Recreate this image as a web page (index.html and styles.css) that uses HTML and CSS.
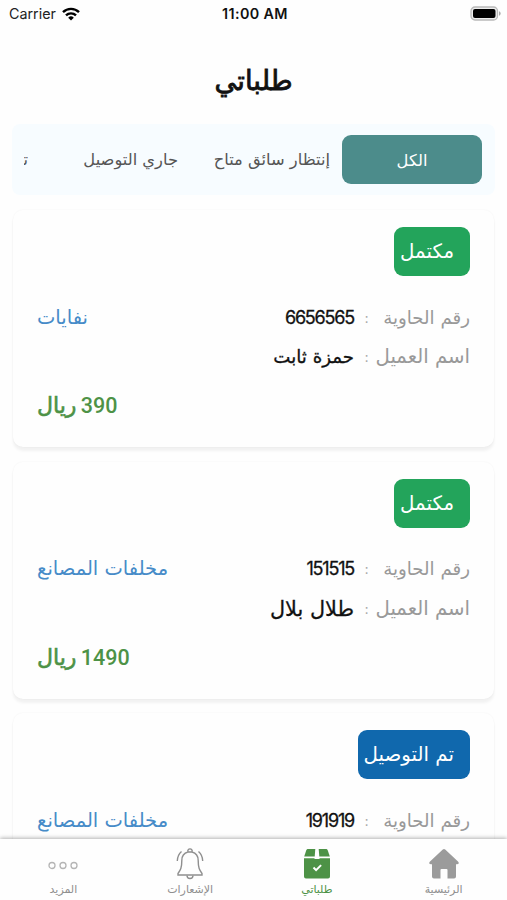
FILE: index.html
```html
<!DOCTYPE html>
<html lang="ar" dir="rtl">
  <head>
    <meta charset="UTF-8" />
    <meta name="viewport" content="width=device-width, initial-scale=1.0" />
    <title>طلباتي</title>
    <link rel="stylesheet" href="styles.css">
  </head>
  <body>
    <div class="statusBar" dir="ltr">
      <div class="carrier">
        Carrier
        <svg width="18" height="14" viewBox="0 0 18 14">
          <g fill="none" stroke="#000" stroke-width="2.4">
            <path d="M1 5.2a11.4 11.4 0 0 1 16 0" />
            <path d="M4 8.4a7.1 7.1 0 0 1 10 0" />
          </g>
          <path d="M9 13.6L6.2 10.7a4 4 0 0 1 5.6 0z" />
        </svg>
      </div>
      <div class="time">11:00 AM</div>
      <div class="battery">
        <svg width="31" height="15" viewBox="0 0 31 15">
          <rect x="1" y="1" width="26.5" height="13" rx="4" fill="#eee" stroke="#b9b9b9" stroke-width="1.3" />
          <rect x="3" y="3" width="22.5" height="9" rx="2" />
          <path d="M29 5.3a2.3 2.3 0 0 1 0 4.4z" fill="#aaa" />
        </svg>
      </div>
    </div>

    <h1 class="title">طلباتي</h1>

    <div class="tabs">
      <div class="tab active">الكل</div>
      <div class="tab waiting">إنتظار سائق متاح</div>
      <div class="tab delivering">جاري التوصيل</div>
      <div class="tab delivered">تم التوصيل</div>
    </div>

    <div class="orders">
      <div class="card">
        <div class="badge done">مكتمل</div>
        <div class="row">
          <span class="label">رقم الحاوية</span><span class="colon">:</span>
          <span class="value number">6656565</span>
          <span class="type">نفايات</span>
        </div>
        <div class="row">
          <span class="label client">اسم العميل</span><span class="colon">:</span>
          <span class="value">حمزة ثابت</span>
        </div>
        <div class="price">390 <span>ريال</span></div>
      </div>

      <div class="card">
        <div class="badge done">مكتمل</div>
        <div class="row">
          <span class="label">رقم الحاوية</span><span class="colon">:</span>
          <span class="value number">151515</span>
          <span class="type">مخلفات المصانع</span>
        </div>
        <div class="row">
          <span class="label client">اسم العميل</span><span class="colon">:</span>
          <span class="value large">طلال بلال</span>
        </div>
        <div class="price">1490 <span>ريال</span></div>
      </div>

      <div class="card">
        <div class="badge sent">تم التوصيل</div>
        <div class="row">
          <span class="label">رقم الحاوية</span><span class="colon">:</span>
          <span class="value number">191919</span>
          <span class="type">مخلفات المصانع</span>
        </div>
      </div>
    </div>

    <div class="navBar">
      <div class="navItem">
        <svg width="32" height="32" viewBox="0 0 32 32" fill="#9b9b9b">
          <path d="M14.8 1.6a1.8 1.8 0 0 1 2.4 0L30 13.4c1.4 1.3.8 2.8-1 2.8h-1V28.5a2 2 0 0 1-2 2h-6.5V22a1 1 0 0 0-1-1h-5a1 1 0 0 0-1 1v8.5H6a2 2 0 0 1-2-2V16.2H3c-1.8 0-2.4-1.5-1-2.8z" />
        </svg>
        الرئيسية
      </div>
      <div class="navItem current">
        <svg width="28" height="32" viewBox="0 0 28 32" fill="#4d9246">
          <path d="M5 1h7.3l-.6 7.5H1.2L3.2 2.5C3.6 1.5 4 1 5 1z" />
          <path d="M15.7 1H23c1 0 1.4.5 1.8 1.5l2 6H16.3z" />
          <path d="M1 10.3h10.5v.7h5v-.7H27V28.5a2 2 0 0 1-2 2H3a2 2 0 0 1-2-2z" />
          <path d="M10.5 19.5l2.6 2.6 5-5" fill="none" stroke="#fff" stroke-width="2" />
        </svg>
        طلباتي
      </div>
      <div class="navItem">
        <svg width="30" height="32" viewBox="0 0 30 32" fill="none" stroke="#8f8f8f" stroke-width="1.4">
          <path d="M13 4a2.2 2.2 0 1 1 4 0M13 4c-4 1-6.2 4-6.2 8.5C6.8 20 5.5 22 3 25.5V27h24v-1.5c-2.5-3.5-3.8-5.5-3.8-13C23.2 8 21 5 17 4" />
          <path d="M12 27.5a3 3 0 0 0 6 0M13 4h4" />
          <path d="M6.5 3.5C4 5.7 2.4 8.8 2.3 13M23.5 3.5c2.5 2.2 4.1 5.3 4.2 9.5" />
        </svg>
        الإشعارات
      </div>
      <div class="navItem">
        <svg width="32" height="32" viewBox="0 0 32 32" fill="none" stroke="#b5b5b5" stroke-width="1.3">
          <circle cx="5" cy="17.5" r="3" />
          <circle cx="16" cy="17.5" r="3" />
          <circle cx="27" cy="17.5" r="3" />
        </svg>
        المزيد
      </div>
    </div>
  </body>
</html>
```

FILE: styles.css
```css
* {
  box-sizing: border-box;
}
body {
  margin: 0;
  height: 900px;
  display: flex;
  flex-direction: column;
  overflow: hidden;
  background-color: #fefefe;
  font-family: "DejaVu Sans", sans-serif;
  white-space: nowrap;
}
.statusBar {
  height: 27px;
  flex: none;
  display: grid;
  grid-template-columns: 1fr auto 1fr;
  align-items: center;
  padding: 0 6px 0 9px;
  font-family: Inter, sans-serif;
  font-size: 14.3px;
  color: #222;
}
.carrier {
  display: flex;
  align-items: center;
  gap: 6px;
}
.time {
  font-weight: 600;
  letter-spacing: 0.4px;
  color: #111;
}
.battery {
  display: flex;
  justify-content: flex-end;
}
.title {
  flex: none;
  height: 97px;
  margin: 0;
  line-height: 107px;
  text-align: center;
  font-size: 27.5px;
  font-weight: normal;
  -webkit-text-stroke: 0.8px #111;
  color: #111;
}
.tabs {
  flex: none;
  display: flex;
  align-items: center;
  height: 71px;
  margin: 0 12px;
  padding: 0 13px;
  background-color: #f7fcff;
  border-radius: 8px;
  overflow: hidden;
}
.tab {
  flex: none;
  font-size: 16.3px;
  line-height: 51px;
  color: #555;
}
.tab.active {
  width: 140px;
  height: 49px;
  margin-left: 12px;
  border-radius: 9px;
  text-align: center;
  background-color: #4c8c8b;
  color: white;
}
.tab.waiting {
  width: 117px;
}
.tab.delivering {
  width: 94px;
  margin-right: 35px;
}
.tab.delivered {
  width: 4px;
  margin-right: 56px;
  overflow: hidden;
}
.orders {
  flex: 1;
  min-height: 0;
  overflow: hidden;
  padding: 15px 13px 0;
}
.card {
  height: 237px;
  margin-bottom: 14.5px;
  padding: 17px 24px 0;
  background-color: #fefefe;
  border-radius: 10px;
  box-shadow: 0 4px 3px rgba(0, 0, 0, 0.05), 0 0 2px rgba(0, 0, 0, 0.05);
}
.badge {
  width: 76px;
  height: 49px;
  margin-bottom: 21px;
  padding-right: 16px;
  border-radius: 9px;
  line-height: 50px;
  font-size: 19.8px;
  color: white;
}
.done {
  background-color: #23a45b;
}
.sent {
  width: 112px;
  background-color: #1068ad;
}
.row {
  display: flex;
  align-items: center;
  height: 39.5px;
  padding-top: 2px;
  font-size: 18.2px;
  line-height: 32px;
}
.label {
  width: 95px;
  color: #999;
}
.client {
  font-size: 19.7px;
}
.colon {
  width: 21px;
  padding-right: 6px;
  color: #aaa;
  font-size: 14px;
}
.value {
  color: #111;
  -webkit-text-stroke: 0.3px #111;
}
.large {
  font-size: 20.8px;
}
.number {
  font-family: Inter, sans-serif;
  font-size: 18px;
  line-height: 30px;
  letter-spacing: -1.2px;
}
.type {
  margin-right: auto;
  font-size: 19.5px;
  color: #468bc8;
}
.price {
  height: 56px;
  line-height: 60px;
  text-align: left;
  font-family: Roboto, sans-serif;
  font-size: 21.5px;
  font-weight: 500;
  letter-spacing: -1.4px;
  word-spacing: -1px;
  color: #4d9246;
}
.price span {
  font-family: "DejaVu Sans", sans-serif;
  font-size: 22px;
  font-weight: normal;
  letter-spacing: 0;
  -webkit-text-stroke: 0.6px #4d9246;
}
.navBar {
  flex: none;
  display: flex;
  position: relative;
  height: 61px;
  background-color: #fefefe;
  box-shadow: 0 -1px 4px rgba(0, 0, 0, 0.3);
}
.navItem {
  flex: 1;
  display: flex;
  flex-direction: column;
  align-items: center;
  padding-top: 9px;
  font-size: 11px;
  line-height: 20px;
  color: #8f8f8f;
}
.navItem svg {
  flex: none;
}
.current {
  color: #4d9246;
}
```
